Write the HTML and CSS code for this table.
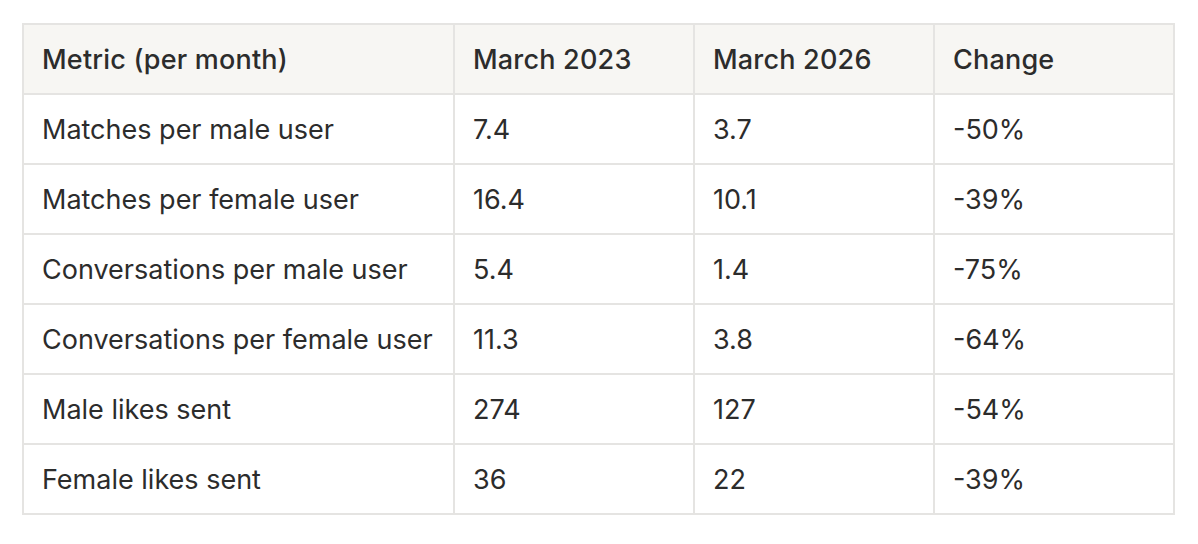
FILE: index.html
```html
<!DOCTYPE html>
<html>
<head>
<meta charset="utf-8">
<link rel="stylesheet" href="styles.css">
</head>
<body>
<table class="metrics">
  <colgroup>
    <col class="c1"><col class="c2"><col class="c3"><col class="c4">
  </colgroup>
  <thead>
    <tr><th>Metric (per month)</th><th>March 2023</th><th>March 2026</th><th>Change</th></tr>
  </thead>
  <tbody>
    <tr><td>Matches per male user</td><td>7.4</td><td>3.7</td><td>-50%</td></tr>
    <tr><td>Matches per female user</td><td>16.4</td><td>10.1</td><td>-39%</td></tr>
    <tr><td>Conversations per male user</td><td>5.4</td><td>1.4</td><td>-75%</td></tr>
    <tr><td>Conversations per female user</td><td>11.3</td><td>3.8</td><td>-64%</td></tr>
    <tr><td>Male likes sent</td><td>274</td><td>127</td><td>-54%</td></tr>
    <tr><td>Female likes sent</td><td>36</td><td>22</td><td>-39%</td></tr>
  </tbody>
</table>
</body>
</html>
```
FILE: styles.css
```css
html, body {
  margin: 0;
  padding: 0;
  background: #ffffff;
}
body {
  padding: 23px 0 0 22px;
  font-family: Inter, "Noto Sans", sans-serif;
  color: #2c2c2c;
}
.metrics {
  border-collapse: separate;
  border-spacing: 0;
  table-layout: fixed;
  width: 1153px;
  border-top: 2px solid #e5e4e2;
  border-left: 2px solid #e5e4e2;
}
.c1 { width: 431px; }
.c2, .c3, .c4 { width: 240px; }
.metrics th, .metrics td {
  border-right: 2px solid #e5e4e2;
  border-bottom: 2px solid #e5e4e2;
  padding: 2px 0 0 18px;
  height: 66px;
  text-align: left;
  font-size: 27px;
  line-height: 32px;
  white-space: nowrap;
}
.metrics th {
  background: #f7f6f3;
  font-weight: 500;
  letter-spacing: 0.2px;
}
.metrics td {
  font-weight: 400;
}
```
